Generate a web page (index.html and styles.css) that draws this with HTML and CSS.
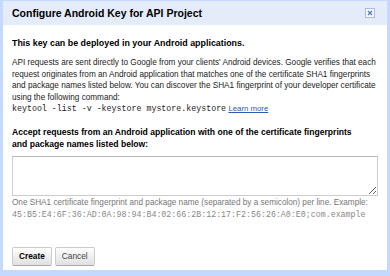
FILE: index.html
```html
<!DOCTYPE html>
<html lang="en">

<head>
    <meta charset="UTF-8">
    <meta name="viewport" content="width=device-width, initial-scale=1.0">
    <title>Configure Android Key for API Project</title>
    <link rel="stylesheet" href="styles.css">
</head>

<body>
    <div class="dialog">
        <div class="dialog-title">
            <span>Configure Android Key for API Project</span>
            <span class="close" title="Close">
                <svg width="8" height="8" viewBox="0 0 8 8">
                    <path d="M2 2 L6 6 M6 2 L2 6" stroke="#5a7bb5" stroke-width="1.3" fill="none"/>
                </svg>
            </span>
        </div>

        <div class="dialog-body">
            <p class="intro">This key can be deployed in your Android applications.</p>

            <p class="text">
                API requests are sent directly to Google from your clients' Android devices. Google verifies that each<br>
                request originates from an Android application that matches one of the certificate SHA1 fingerprints<br>
                and package names listed below. You can discover the SHA1 fingerprint of your developer certificate<br>
                using the following command:<br>
                <code>keytool -list -v -keystore mystore.keystore</code> <a href="#">Learn more</a>
            </p>

            <!-- Список отпечатков -->
            <label class="field-label" for="fingerprints">Accept requests from an Android application with one of the certificate fingerprints<br>and package names listed below:</label>
            <textarea id="fingerprints" class="field"></textarea>
            <p class="hint">
                One SHA1 certificate fingerprint and package name (separated by a semicolon) per line. Example:<br>
                <code>45:B5:E4:6F:36:AD:0A:98:94:B4:02:66:2B:12:17:F2:56:26:A0:E0;com.example</code>
            </p>

            <div class="buttons">
                <button class="button primary">Create</button>
                <button class="button">Cancel</button>
            </div>
        </div>
    </div>
</body>

</html>
```

FILE: styles.css
```css
body {
    font-family: Arial, "Liberation Sans", sans-serif;
    margin: 0;
    padding: 0;
    background-color: #ffffff;
}

.dialog {
    height: 276px;
    box-sizing: border-box;
    border: 3px solid #c3d9ff;
    border-top-width: 1px;
    border-bottom-width: 6px;
    background-color: #ffffff;
}

.dialog-title {
    display: flex;
    justify-content: space-between;
    align-items: center;
    height: 24px;
    padding: 0 12px 0 9px;
    background-color: #e5ecf9;
    font-size: 10.5px;
    font-weight: bold;
    color: #000000;
}

.close {
    display: flex;
    align-items: center;
    justify-content: center;
    width: 8px;
    height: 8px;
    border: 1px solid #a9bde0;
    background-color: #f4f7fd;
}

.dialog-body {
    padding: 0 7px 0 9px;
}

p {
    margin: 0;
}

.intro {
    margin-top: 12px;
    font-size: 8.9px;
    font-weight: bold;
    line-height: 12px;
    color: #000000;
}

.text {
    margin-top: 8px;
    font-size: 8.2px;
    line-height: 11.6px;
    color: #222222;
    white-space: nowrap;
}

code {
    font-family: "Liberation Mono", "Courier New", monospace;
    font-size: 8.3px;
}

.text a {
    color: #2a5db0;
    text-decoration: underline;
    font-size: 7.8px;
}

.field-label {
    display: block;
    margin-top: 11px;
    font-size: 8.6px;
    font-weight: bold;
    line-height: 12.5px;
    color: #000000;
    white-space: nowrap;
}

.field {
    display: block;
    width: calc(100% - 2px);
    box-sizing: border-box;
    height: 40px;
    margin-top: 5px;
    border: 1px solid #cccccc;
    border-top-color: #bbbbbb;
    resize: vertical;
}

.hint {
    margin-top: 1px;
    font-size: 8.2px;
    line-height: 12px;
    color: #777777;
    white-space: nowrap;
}

.hint code {
    color: #888888;
    font-size: 8.3px;
}

.buttons {
    display: flex;
    gap: 3px;
    margin-top: 26px;
}

.button {
    height: 19px;
    padding: 0 6px;
    font-family: Arial, "Liberation Sans", sans-serif;
    font-size: 8.3px;
    color: #444444;
    border: 1px solid #cccccc;
    border-bottom-color: #aaaaaa;
    border-radius: 2px;
    background: linear-gradient(#ffffff, #e0e0e0);
}

.button.primary {
    font-weight: bold;
    color: #000000;
}
```
